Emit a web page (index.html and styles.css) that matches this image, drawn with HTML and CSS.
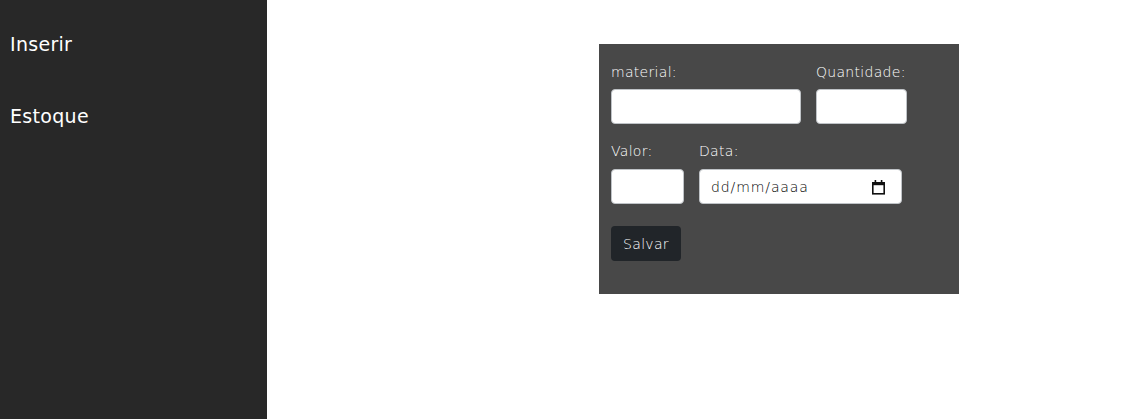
FILE: index.html
```html
<!DOCTYPE html>
<html lang="pt">
<head>
<meta charset="utf-8">
<title>Estoque</title>
<link rel="stylesheet" href="styles.css">
</head>
<body>
<div class="app">
  <nav class="sidebar">
    <a class="nav-link" href="#">Inserir</a>
    <a class="nav-link" href="#">Estoque</a>
  </nav>
  <main class="main">
    <form class="card">
      <div class="row">
        <div class="group g-material">
          <label class="label">material:</label>
          <input class="input" type="text">
        </div>
        <div class="group g-qtd">
          <label class="label">Quantidade:</label>
          <input class="input" type="text">
        </div>
      </div>
      <div class="row row-2">
        <div class="group g-valor">
          <label class="label">Valor:</label>
          <input class="input" type="text">
        </div>
        <div class="group g-data">
          <label class="label">Data:</label>
          <div class="input date">
            <span class="date-text">dd/mm/aaaa</span>
            <svg class="cal" width="15" height="16" viewBox="0 0 15 16">
              <rect x="1.8" y="3.8" width="11.4" height="11" fill="none" stroke="#111" stroke-width="1.6"/>
              <rect x="1" y="3" width="13" height="3.2" fill="#111"/>
              <rect x="3.6" y="1" width="1.6" height="3" fill="#111"/>
              <rect x="9.8" y="1" width="1.6" height="3" fill="#111"/>
            </svg>
          </div>
        </div>
      </div>
      <button class="btn" type="button">Salvar</button>
    </form>
  </main>
</div>
</body>
</html>
```

FILE: styles.css
```css
* { box-sizing: border-box; }
html, body { margin: 0; padding: 0; height: 100%; }
body { background: #fff; font-family: "DejaVu Sans", sans-serif; }
.app { display: flex; height: 419px; }
.sidebar {
  width: 267px;
  background: #282828;
  display: flex;
  flex-direction: column;
  padding: 32px 0 0 10px;
  gap: 48px;
}
.nav-link {
  color: #fff;
  text-decoration: none;
  font-size: 19px;
  line-height: 24px;
  letter-spacing: 0.3px;
}
.main { flex: 1; padding: 44px 0 0 332px; }
.card {
  width: 360px;
  height: 250px;
  background: #484848;
  padding: 16px 12px 0 12px;
  display: flex;
  flex-direction: column;
  gap: 15px;
}
.row { display: flex; gap: 15px; }
.group { display: flex; flex-direction: column; }
.label {
  color: #fff;
  font-size: 14px;
  font-weight: 200;
  line-height: 24px;
  margin-bottom: 5px;
  letter-spacing: 0.3px;
}
.row-2 .label { margin-bottom: 6px; }
.input {
  height: 35px;
  border: 1px solid #bfc3c7;
  border-radius: 4px;
  background: #fff;
  padding: 0 12px;
  font-family: "DejaVu Sans", sans-serif;
  font-size: 14px;
}
.g-material .input { width: 190px; }
.g-qtd .input { width: 91px; }
.g-valor .input { width: 73px; }
.g-data .input { width: 203px; }
.date {
  display: flex;
  align-items: center;
  justify-content: space-between;
  padding: 0 15px 0 11px;
}
.date-text { color: #000; font-size: 14px; font-weight: 200; letter-spacing: 0.9px; }
.btn {
  margin-top: 7px;
  width: 70px;
  height: 35px;
  background: #212529;
  color: #fff;
  border: none;
  border-radius: 4px;
  font-family: "DejaVu Sans", sans-serif;
  font-size: 14px;
  font-weight: 200;
  letter-spacing: 0.3px;
  padding: 0;
  align-self: flex-start;
}
```
